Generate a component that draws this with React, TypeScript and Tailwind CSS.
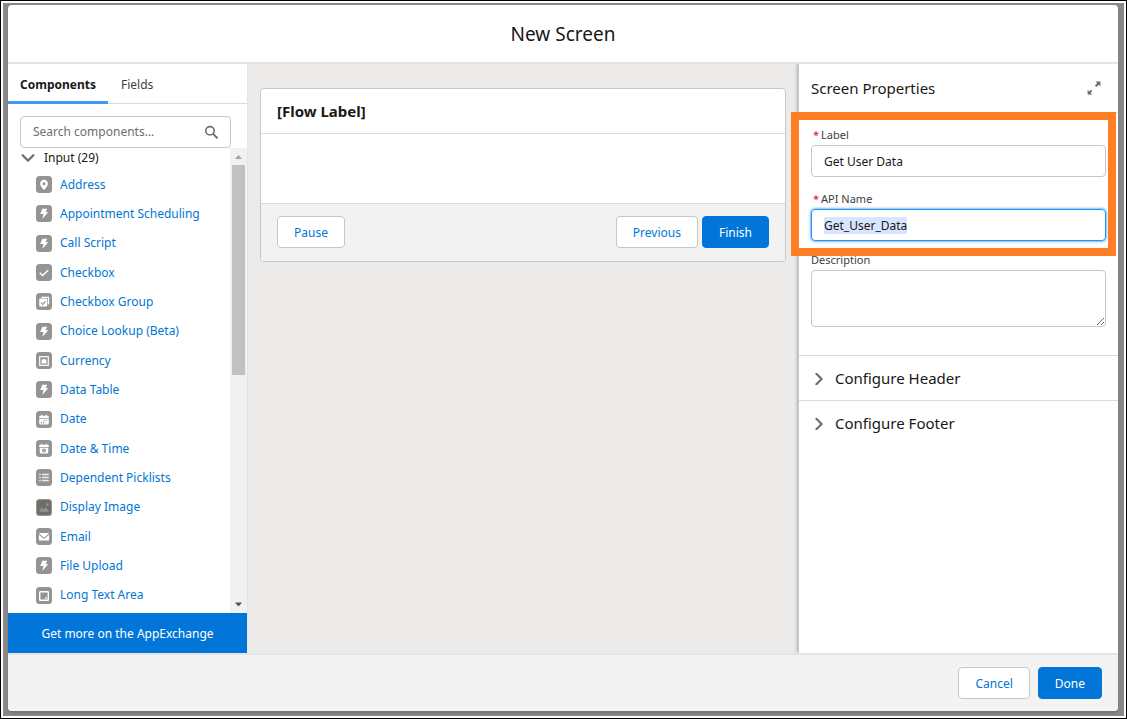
import { useEffect, useRef, type ReactNode } from "react";

type IconName =
  | "pin"
  | "bolt"
  | "check"
  | "checkGroup"
  | "currency"
  | "date"
  | "datetime"
  | "list"
  | "image"
  | "email"
  | "textarea";

const components: { label: string; icon: IconName }[] = [
  { label: "Address", icon: "pin" },
  { label: "Appointment Scheduling", icon: "bolt" },
  { label: "Call Script", icon: "bolt" },
  { label: "Checkbox", icon: "check" },
  { label: "Checkbox Group", icon: "checkGroup" },
  { label: "Choice Lookup (Beta)", icon: "bolt" },
  { label: "Currency", icon: "currency" },
  { label: "Data Table", icon: "bolt" },
  { label: "Date", icon: "date" },
  { label: "Date & Time", icon: "datetime" },
  { label: "Dependent Picklists", icon: "list" },
  { label: "Display Image", icon: "image" },
  { label: "Email", icon: "email" },
  { label: "File Upload", icon: "bolt" },
  { label: "Long Text Area", icon: "textarea" },
];

const glyphs: Record<IconName, ReactNode> = {
  pin: (
    <path
      fillRule="evenodd"
      fill="#fff"
      d="M8 3.8a3.9 3.9 0 0 0-3.9 4c0 2.3 2.5 4.4 3.4 5.8.2.3.8.3 1 0 .9-1.4 3.4-3.5 3.4-5.8a3.9 3.9 0 0 0-3.9-4Zm0 5.4A1.5 1.5 0 1 1 8 6.2a1.5 1.5 0 0 1 0 3Z"
    />
  ),
  bolt: <path fill="#fff" d="M6.4 3.8h4.7L9.7 7.2h2.6l-6 6.8 1.3-5H4.2Z" />,
  check: <path fill="none" stroke="#fff" strokeWidth="1.5" d="m3.8 8.8 2.7 2.7 5.7-5.3" />,
  checkGroup: (
    <>
      <path fill="none" stroke="#fff" strokeWidth="1.3" d="M5.5 4.4h7v6.8" />
      <rect x="3.2" y="5.6" width="8" height="8" rx="1" fill="#fff" />
      <path fill="none" stroke="#969492" strokeWidth="1.2" d="m5 9.7 1.6 1.6L9.6 8.1" />
    </>
  ),
  currency: (
    <>
      <rect x="3.7" y="4.7" width="8.6" height="8.6" fill="none" stroke="#fff" strokeWidth="1.2" />
      <path fill="#fff" d="M5.5 11.5V9.3C5.5 7.8 6.6 7.1 8 7.1s2.5.7 2.5 2.2v2.2Z" />
    </>
  ),
  date: (
    <>
      <path
        fill="#fff"
        d="M4 4.8h1.2V3.7h1.2v1.1h3.2V3.7h1.2v1.1H12c.6 0 .8.3.8.8v1.3H3.2V5.6c0-.5.2-.8.8-.8ZM3.2 7.7h9.6v4.9c0 .5-.3.8-.8.8H4c-.5 0-.8-.3-.8-.8Z"
      />
      <path stroke="#969492" strokeWidth="1.1" strokeDasharray="1.2 1" d="M7.4 9.5h3.8M4.8 11.6h4.6" />
    </>
  ),
  datetime: (
    <>
      <path
        fill="#fff"
        d="M4 4.8h1.2V3.7h1.2v1.1h3.2V3.7h1.2v1.1H12c.6 0 .8.3.8.8v1.3H3.2V5.6c0-.5.2-.8.8-.8ZM3.8 7.7h8.4v4.9c0 .5-.3.8-.8.8H4.6c-.5 0-.8-.3-.8-.8Z"
      />
      <circle cx="8" cy="10.5" r="1.9" fill="#969492" />
      <path fill="none" stroke="#fff" strokeWidth=".6" d="M8 9.5v1.1l.8.5" />
    </>
  ),
  list: (
    <path
      stroke="#fff"
      strokeWidth="1.4"
      strokeOpacity=".85"
      d="M3.2 5.5h1.6M6 5.5h6.8M3.2 8.5h1.6M6 8.5h6.8M3.2 11.5h1.6M6 11.5h6.8"
    />
  ),
  image: (
    <>
      <path fill="#969492" d="m3 12.8 2.8-4.6 2 2.5L9.6 8l3.4 4.8Z" />
      <circle cx="11.3" cy="5.6" r="1.3" fill="#969492" />
    </>
  ),
  email: (
    <>
      <path fill="#fff" d="M3.4 4.9h9.2c.3 0 .5.3.3.5L8.5 9.3a.8.8 0 0 1-1 0L3.1 5.4c-.2-.2 0-.5.3-.5Z" />
      <path fill="#fff" d="M2.9 6.7 7 10.3c.6.5 1.4.5 2 0l4.1-3.6v4.8c0 .5-.3.9-.8.9H3.7c-.5 0-.8-.4-.8-.9Z" />
    </>
  ),
  textarea: (
    <>
      <rect x="3.7" y="4.7" width="8.6" height="8.6" rx=".6" fill="none" stroke="#fff" strokeWidth="1.4" />
      <path fill="#fff" d="M10.8 9.4v2.4H8.4Z" />
    </>
  ),
};

function ComponentIcon({ name }: { name: IconName }) {
  return (
    <svg viewBox="0 0 16 17" className="h-[17px] w-4 shrink-0" aria-hidden="true">
      <rect width="16" height="17" rx="3.5" fill="#969492" />
      {name === "image" && <rect x="1" y="1" width="14" height="15" rx="2.5" fill="#706e6b" />}
      {glyphs[name]}
    </svg>
  );
}

function Chevron({ down = false }: { down?: boolean }) {
  return (
    <svg viewBox="0 0 14 14" className="h-3.5 w-3.5 shrink-0" aria-hidden="true">
      <path
        fill="none"
        stroke="#706e6b"
        strokeWidth="2.2"
        strokeLinecap="round"
        strokeLinejoin="round"
        d={down ? "M1.6 4.2 7 9.6l5.4-5.4" : "M5.4 2.8 10.6 8l-5.2 5.2"}
      />
    </svg>
  );
}

function Button({ children, primary = false }: { children: ReactNode; primary?: boolean }) {
  return (
    <button
      type="button"
      className={
        primary
          ? "h-8 rounded border border-[#0176d8] bg-[#0176d8] px-4 pt-0.5 text-white"
          : "h-8 rounded border border-[#c9c7c5] bg-white px-4 pt-0.5 text-[#0176d3]"
      }
    >
      {children}
    </button>
  );
}

function Sidebar() {
  return (
    <aside className="flex w-60 shrink-0 flex-col border-r border-[#e5e5e5] bg-white">
      <div role="tablist" className="flex h-10 shrink-0 gap-px border-b border-[#dddbda]">
        <button type="button" role="tab" aria-selected="true" className="relative px-3 pt-0.5 font-bold">
          Components
          <span className="absolute inset-x-0 -bottom-px h-[3px] bg-[#3e97f7]" />
        </button>
        <button type="button" role="tab" aria-selected="false" className="px-3 pt-0.5 text-[#3e3e3c]">
          Fields
        </button>
      </div>
      <div className="mt-3 mr-4 ml-3 flex h-8 shrink-0 items-center rounded border border-[#c9c7c5] px-3">
        <input
          type="search"
          aria-label="Search components"
          placeholder="Search components..."
          className="w-full min-w-0 bg-transparent outline-none placeholder:text-[#706e6b]"
        />
        <svg viewBox="0 0 14 14" className="h-3.5 w-3.5 shrink-0" aria-hidden="true">
          <circle cx="6" cy="5.8" r="4.2" fill="none" stroke="#706e6b" strokeWidth="1.6" />
          <path stroke="#706e6b" strokeWidth="2" strokeLinecap="round" d="m9.6 9.4 3.4 3.4" />
        </svg>
      </div>
      <div className="flex flex-1">
        <div className="flex min-w-0 flex-1 flex-col pb-[3px]">
          <button type="button" aria-expanded="true" className="flex h-5 shrink-0 items-center gap-[9px] pl-[13px]">
            <Chevron down />
            <span>Input (29)</span>
          </button>
          <ul className="flex flex-1 flex-col pt-0.5">
            {components.map((item) => (
              <li key={item.label} className="flex flex-1 items-center">
                <a href="#" className="flex items-center gap-2 pl-7 leading-5 text-[#0176d3]">
                  <ComponentIcon name={item.icon} />
                  {item.label}
                </a>
              </li>
            ))}
          </ul>
        </div>
        <div className="flex w-[17px] shrink-0 flex-col items-center bg-[#f1f1f1]" aria-hidden="true">
          <svg viewBox="0 0 17 17" className="h-[17px] w-[17px] shrink-0">
            <path fill="#a3a3a3" d="M8.5 7 12 11H5Z" />
          </svg>
          <div className="h-[210px] w-[13px] bg-[#c1c1c1]" />
          <svg viewBox="0 0 17 17" className="mt-auto h-[17px] w-[17px] shrink-0">
            <path fill="#505050" d="M8.5 10.5 5 6.5h7Z" />
          </svg>
        </div>
      </div>
      <button type="button" className="h-10 shrink-0 bg-[#0176d8] pt-0.5 text-white">
        Get more on the AppExchange
      </button>
    </aside>
  );
}

function Preview() {
  return (
    <section className="min-w-0 flex-1 bg-[#ecebea] px-3 pt-6">
      <div className="overflow-hidden rounded border border-[#c9c7c5] bg-white">
        <h2 className="flex h-11 items-center px-4 text-[15px] font-bold">[Flow Label]</h2>
        <div className="h-[71px] border-y border-[#dddbda]" />
        <div className="flex items-center gap-1 bg-[#f2f2f2] px-4 pt-3 pb-[13px]">
          <div className="mr-auto">
            <Button>Pause</Button>
          </div>
          <Button>Previous</Button>
          <Button primary>Finish</Button>
        </div>
      </div>
    </section>
  );
}

function Section({ title }: { title: string }) {
  return (
    <button
      type="button"
      aria-expanded="false"
      className="flex h-[45px] w-full items-center gap-[10px] border-t border-[#dddbda] px-3 text-[15px]"
    >
      <Chevron />
      {title}
    </button>
  );
}

function Properties() {
  const apiName = useRef<HTMLInputElement>(null);

  useEffect(() => {
    apiName.current?.focus();
    apiName.current?.select();
  }, []);

  return (
    <aside className="w-80 shrink-0 border-l border-[#c9c7c5] bg-white shadow-[-1px_0_3px_rgba(0,0,0,0.25)]">
      <div className="flex h-[49px] items-center justify-between border-b border-[#e5e5e5] px-3">
        <h2 className="text-[15px]">Screen Properties</h2>
        <button type="button" aria-label="Expand" className="mr-[5px]">
          <svg viewBox="0 0 14 14" className="h-3.5 w-3.5" aria-hidden="true">
            <path
              fill="#706e6b"
              d="M8.6.6h4.8v4.8l-1.7-1.6-2.2 2.3-1.6-1.6 2.3-2.2ZM.6 8.8l1.6 1.6 1.7-1.7 1.4 1.4-1.7 1.7 1.6 1.6H.6Z"
            />
          </svg>
        </button>
      </div>
      <div className="px-3 pt-3 pb-7">
        <div className="relative flex flex-col gap-3">
          <div>
            <label htmlFor="label" className="flex h-5 items-center gap-0.5 pl-0.5 text-[11px] text-[#3e3e3c]">
              <span className="text-[#ea001e]">*</span>Label
            </label>
            <input
              id="label"
              defaultValue="Get User Data"
              className="block h-8 w-full rounded border border-[#c9c7c5] px-3 outline-none"
            />
          </div>
          <div>
            <label htmlFor="api-name" className="flex h-5 items-center gap-0.5 pl-0.5 text-[11px] text-[#3e3e3c]">
              <span className="text-[#ea001e]">*</span>API Name
            </label>
            <input
              id="api-name"
              ref={apiName}
              defaultValue="Get_User_Data"
              className="block h-8 w-full rounded border border-[#1b96ff] px-3 leading-[30px] shadow-[0_0_3px_#0176d3] outline-none selection:bg-[#d7e5fe] selection:text-[#181818]"
            />
          </div>
          <div className="pointer-events-none absolute -top-[13px] -right-[10px] -bottom-[15px] -left-5 z-10 border-8 border-[#ff7f27]" />
        </div>
        <label htmlFor="description" className="mt-[9px] flex h-5 items-center text-[11px] text-[#3e3e3c]">
          Description
        </label>
        <textarea
          id="description"
          className="block h-[57px] w-full resize rounded border border-[#c9c7c5] px-3 py-1 outline-none"
        />
      </div>
      <Section title="Configure Header" />
      <Section title="Configure Footer" />
    </aside>
  );
}

export default function App() {
  return (
    <div className="flex min-h-screen border border-black bg-white p-0.5 font-['Noto_Sans','Open_Sans',sans-serif] text-xs text-[#181818]">
      <div className="flex flex-1 bg-[#8a8888] pt-0.5 pr-1.5 pb-[5px] pl-[5px]">
        <main className="flex min-w-0 flex-1 flex-col overflow-hidden rounded bg-white shadow-[0_2px_3px_rgba(0,0,0,0.16)]">
          <header className="flex h-[59px] shrink-0 items-center justify-center border-b-2 border-[#e5e5e5] pt-0.5">
            <h1 className="text-[19px]">New Screen</h1>
          </header>
          <div className="flex flex-1 overflow-hidden">
            <Sidebar />
            <Preview />
            <Properties />
          </div>
          <footer className="flex h-[58px] shrink-0 items-center justify-end gap-2 border-t-2 border-[#e5e5e5] bg-[#f3f3f3] px-4">
            <Button>Cancel</Button>
            <Button primary>Done</Button>
          </footer>
        </main>
      </div>
    </div>
  );
}
